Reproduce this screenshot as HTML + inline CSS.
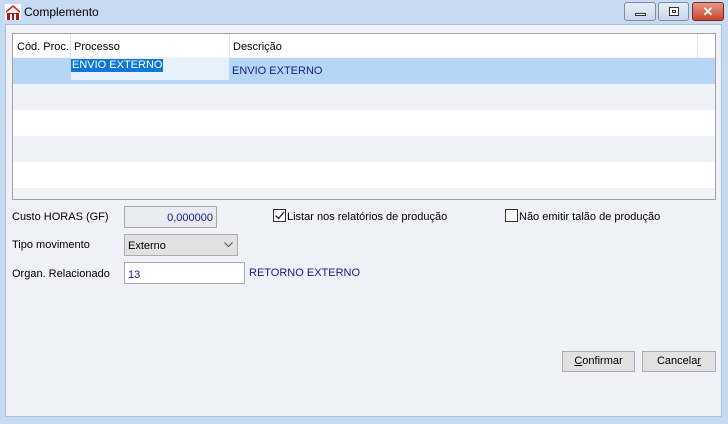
<!DOCTYPE html>
<html><head><style>
*{margin:0;padding:0;box-sizing:border-box}
body{width:728px;height:424px;overflow:hidden;background:#c6dbf1;font-family:"Liberation Sans",sans-serif;font-size:11px;color:#000;position:relative}
.a{position:absolute}
.title{left:24px;top:5px;font-size:12px}
.client{left:5px;top:24px;width:717px;height:393px;background:#f1f1f9;border:1px solid #a9c1da}
.grid{left:12px;top:33px;width:704px;height:167px;background:#f1f1f9;border:1px solid #a0a0a0}
.btn{border:1px solid #adadad;background:#e1e1e1;text-align:center;line-height:19px}
.wb{top:2px;height:19px;border:1px solid #7a8fa8;border-radius:3px;background:linear-gradient(#e6eef8,#c9d8ea)}
</style></head><body>
<svg class="a" style="left:5px;top:4px" width="16" height="16" viewBox="0 0 16 16"><rect width="16" height="16" fill="#fff"/><path d="M1 7 L8 1 L15 7 L15 9 L8 3 L1 9Z" fill="#c22"/><rect x="2" y="9" width="12" height="7" fill="#b01818"/><rect x="5" y="10" width="2" height="6" fill="#fff"/><rect x="9" y="10" width="2" height="6" fill="#fff"/></svg>
<div class="a title">Complemento</div>
<div class="a wb" style="left:624px;width:32px"><div class="a" style="left:10px;top:10px;width:11px;height:3px;background:#fff;border:1px solid #333"></div></div>
<div class="a wb" style="left:658px;width:31px"><div class="a" style="left:10px;top:4px;width:10px;height:9px;border:1px solid #333;background:#fff"><div style="margin:2px;height:3px;border:1px solid #333"></div></div></div>
<div class="a" style="left:692px;top:2px;width:32px;height:19px;border:1px solid #7a2a20;border-radius:3px;background:linear-gradient(#e49a88,#c7452f);color:#fff;font-weight:bold;font-size:13px;text-align:center;line-height:17px">✕</div>
<div class="a client"></div>
<div class="a grid">
 <div class="a" style="left:0;top:0;width:702px;height:23px;background:#fff"></div>
 <div class="a" style="left:57px;top:0;width:1px;height:23px;background:#e4e4e4"></div>
 <div class="a" style="left:216px;top:0;width:1px;height:23px;background:#e4e4e4"></div>
 <div class="a" style="left:684px;top:0;width:1px;height:23px;background:#e4e4e4"></div>
 <div class="a" style="left:4px;top:7px">Cód. Proc.</div>
 <div class="a" style="left:61px;top:7px">Processo</div>
 <div class="a" style="left:220px;top:7px">Descrição</div>
 <div class="a" style="left:0;top:24px;width:702px;height:26px;background:#b5d7f5"></div>
 <div class="a" style="left:58px;top:24px;width:158px;height:22px;background:#e6f1fb"></div>
 <div class="a" style="left:58px;top:25px;height:13px;padding:0 1px;background:#0e78d5;color:#fff;line-height:13px">ENVIO EXTERNO</div>
 <div class="a" style="left:219px;top:31px;color:#1a1a8c">ENVIO EXTERNO</div>
 <div class="a" style="left:0;top:76px;width:702px;height:26px;background:#fff"></div>
 <div class="a" style="left:0;top:128px;width:702px;height:26px;background:#fff"></div>
</div>
<div class="a" style="left:12px;top:211px">Custo HORAS (GF)</div>
<div class="a" style="left:124px;top:206px;width:93px;height:22px;border:1px solid #a8a8a8;background:#ebebf3;color:#1a1a8c;text-align:right;padding:5px 3px 0 0">0,000000</div>
<div class="a" style="left:273px;top:209px;width:13px;height:13px;border:1px solid #333;background:#fff"><svg width="11" height="11" style="display:block"><path d="M1.5 5.5 L4.5 8.5 L10 2" fill="none" stroke="#222" stroke-width="1.3"/></svg></div>
<div class="a" style="left:287px;top:211px">Listar nos relatórios de produção</div>
<div class="a" style="left:505px;top:209px;width:13px;height:13px;border:1px solid #333;background:#fff"></div>
<div class="a" style="left:519px;top:211px">Não emitir talão de produção</div>
<div class="a" style="left:12px;top:239px">Tipo movimento</div>
<div class="a" style="left:124px;top:234px;width:114px;height:22px;border:1px solid #adadad;background:#e1e1e1;padding:5px 3px"><span>Externo</span><svg class="a" style="left:99px;top:7px" width="9" height="6"><path d="M0.5 0.5 L4.5 4.5 L8.5 0.5" fill="none" stroke="#555"/></svg></div>
<div class="a" style="left:12px;top:268px">Organ. Relacionado</div>
<div class="a" style="left:124px;top:262px;width:121px;height:22px;border:1px solid #a8a8a8;background:#fff;color:#1a1a8c;padding:6px 3px 0">13</div>
<div class="a" style="left:249px;top:267px;color:#1a1a8c">RETORNO EXTERNO</div>
<div class="a btn" style="left:562px;top:351px;width:73px;height:21px"><u>C</u>onfirmar</div>
<div class="a btn" style="left:642px;top:351px;width:74px;height:21px">Cancela<u>r</u></div>
</body></html>
